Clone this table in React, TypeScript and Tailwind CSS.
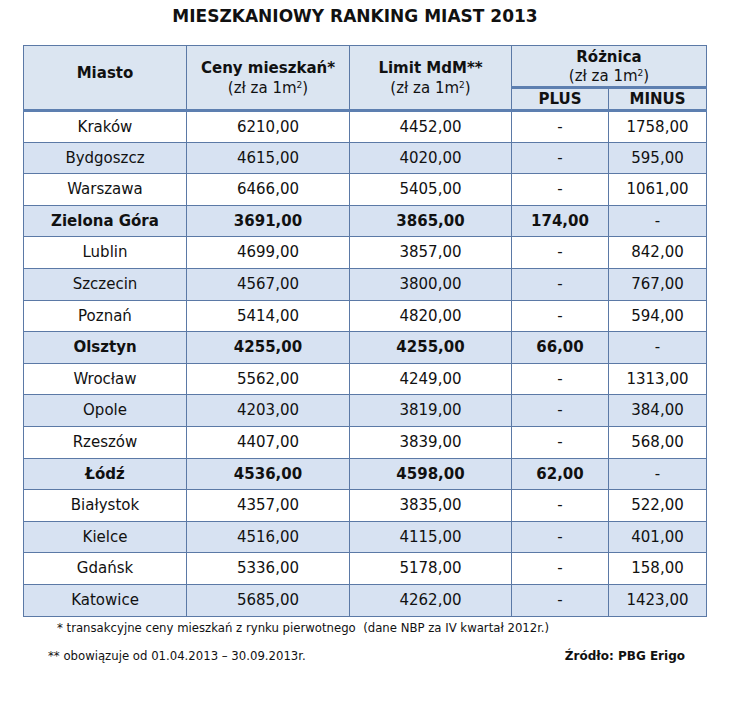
const rows: { city: string; price: string; limit: string; plus: string; minus: string; bold?: boolean }[] = [
  { city: 'Kraków', price: '6210,00', limit: '4452,00', plus: '-', minus: '1758,00' },
  { city: 'Bydgoszcz', price: '4615,00', limit: '4020,00', plus: '-', minus: '595,00' },
  { city: 'Warszawa', price: '6466,00', limit: '5405,00', plus: '-', minus: '1061,00' },
  { city: 'Zielona Góra', price: '3691,00', limit: '3865,00', plus: '174,00', minus: '-', bold: true },
  { city: 'Lublin', price: '4699,00', limit: '3857,00', plus: '-', minus: '842,00' },
  { city: 'Szczecin', price: '4567,00', limit: '3800,00', plus: '-', minus: '767,00' },
  { city: 'Poznań', price: '5414,00', limit: '4820,00', plus: '-', minus: '594,00' },
  { city: 'Olsztyn', price: '4255,00', limit: '4255,00', plus: '66,00', minus: '-', bold: true },
  { city: 'Wrocław', price: '5562,00', limit: '4249,00', plus: '-', minus: '1313,00' },
  { city: 'Opole', price: '4203,00', limit: '3819,00', plus: '-', minus: '384,00' },
  { city: 'Rzeszów', price: '4407,00', limit: '3839,00', plus: '-', minus: '568,00' },
  { city: 'Łódź', price: '4536,00', limit: '4598,00', plus: '62,00', minus: '-', bold: true },
  { city: 'Białystok', price: '4357,00', limit: '3835,00', plus: '-', minus: '522,00' },
  { city: 'Kielce', price: '4516,00', limit: '4115,00', plus: '-', minus: '401,00' },
  { city: 'Gdańsk', price: '5336,00', limit: '5178,00', plus: '-', minus: '158,00' },
  { city: 'Katowice', price: '5685,00', limit: '4262,00', plus: '-', minus: '1423,00' },
];

const unit = (
  <span className="font-normal">
    (zł za 1m<sup className="text-[9px]">2</sup>)
  </span>
);

export default function App() {
  const th = 'border border-[#5b79a6] bg-[#dbe5f1] text-center align-middle font-bold';
  return (
    <div className="w-[748px] h-[702px] bg-white text-[#111] pt-[6px]" style={{ fontFamily: '"DejaVu Sans", Verdana, sans-serif' }}>
      <h1 className="text-center text-[17px] leading-[20px] font-bold pr-[38px]">MIESZKANIOWY RANKING MIAST 2013</h1>

      <table className="ml-[23px] mt-[19px] border-collapse table-fixed w-[683px] text-[15px]">
        <colgroup>
          <col className="w-[163px]" />
          <col className="w-[163px]" />
          <col className="w-[162px]" />
          <col className="w-[97px]" />
          <col className="w-[98px]" />
        </colgroup>
        <thead>
          <tr className="h-[42px]">
            <th rowSpan={2} className={`${th} border-b-[3px] border-b-[#5d7fb0] pb-[8px]`}>Miasto</th>
            <th rowSpan={2} className={`${th} border-b-[3px] border-b-[#5d7fb0] leading-[20px]`}>
              Ceny mieszkań*
              <br />
              {unit}
            </th>
            <th rowSpan={2} className={`${th} border-b-[3px] border-b-[#5d7fb0] leading-[20px]`}>
              Limit MdM**
              <br />
              {unit}
            </th>
            <th colSpan={2} className={`${th} border-b-[3px] border-b-[#5d7fb0] leading-[19px] pt-[1px]`}>
              Różnica
              <br />
              {unit}
            </th>
          </tr>
          <tr className="h-[23px]">
            <th className={`${th} border-b-[3px] border-b-[#5d7fb0] leading-[18px]`}>PLUS</th>
            <th className={`${th} border-b-[3px] border-b-[#5d7fb0] leading-[18px]`}>MINUS</th>
          </tr>
        </thead>
        <tbody>
          {rows.map((r, i) => (
            <tr key={r.city} className={`h-[31.6px] ${i % 2 === 1 ? 'bg-[#d7e2f2]' : 'bg-white'} ${r.bold ? 'font-bold' : ''}`}>
              <td className="border border-[#5b79a6] text-center">{r.city}</td>
              <td className="border border-[#5b79a6] text-center">{r.price}</td>
              <td className="border border-[#5b79a6] text-center">{r.limit}</td>
              <td className={`border border-[#5b79a6] text-center ${r.plus === '-' ? 'font-normal' : ''}`}>{r.plus}</td>
              <td className={`border border-[#5b79a6] text-center ${r.minus === '-' ? 'font-normal' : ''}`}>{r.minus}</td>
            </tr>
          ))}
        </tbody>
      </table>

      <div className="text-[13px] leading-[16px]" style={{ fontFamily: '"DejaVu Sans Condensed", "DejaVu Sans", sans-serif' }}>
        <p className="pl-[57px] mt-[3px]">* transakcyjne ceny mieszkań z rynku pierwotnego&nbsp; (dane NBP za IV kwartał 2012r.)</p>
        <div className="flex items-center justify-between mt-[12px] pl-[48px] pr-[63px]">
          <span>** obowiązuje od 01.04.2013 – 30.09.2013r.</span>
          <span className="font-bold text-[12px]" style={{ fontFamily: '"DejaVu Sans", sans-serif' }}>Źródło: PBG Erigo</span>
        </div>
      </div>
    </div>
  );
}
